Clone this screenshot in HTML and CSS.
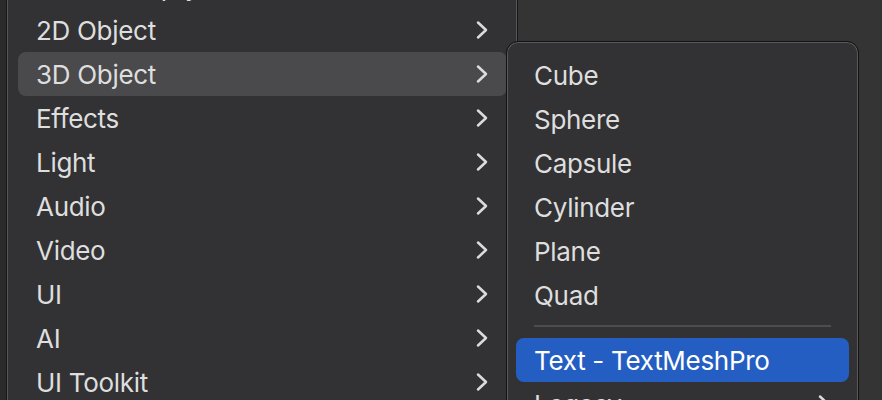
FILE: index.html
```html
<!DOCTYPE html>
<html lang="en">
<head>
<meta charset="utf-8">
<title>GameObject menu</title>
<link rel="stylesheet" href="styles.css">
</head>
<body>
<div class="screen">
  <div class="menu main-menu">
    <ul class="items">
      <li class="item"><span class="label">Create Empty Parent</span></li>
      <li class="item"><span class="label">2D Object</span><svg class="chev" viewBox="0 0 14 20"><path d="M3 2.5 L11 10 L3 17.5"/></svg></li>
      <li class="item active"><span class="label">3D Object</span><svg class="chev" viewBox="0 0 14 20"><path d="M3 2.5 L11 10 L3 17.5"/></svg></li>
      <li class="item"><span class="label">Effects</span><svg class="chev" viewBox="0 0 14 20"><path d="M3 2.5 L11 10 L3 17.5"/></svg></li>
      <li class="item"><span class="label">Light</span><svg class="chev" viewBox="0 0 14 20"><path d="M3 2.5 L11 10 L3 17.5"/></svg></li>
      <li class="item"><span class="label">Audio</span><svg class="chev" viewBox="0 0 14 20"><path d="M3 2.5 L11 10 L3 17.5"/></svg></li>
      <li class="item"><span class="label">Video</span><svg class="chev" viewBox="0 0 14 20"><path d="M3 2.5 L11 10 L3 17.5"/></svg></li>
      <li class="item"><span class="label">UI</span><svg class="chev" viewBox="0 0 14 20"><path d="M3 2.5 L11 10 L3 17.5"/></svg></li>
      <li class="item"><span class="label">AI</span><svg class="chev" viewBox="0 0 14 20"><path d="M3 2.5 L11 10 L3 17.5"/></svg></li>
      <li class="item"><span class="label">UI Toolkit</span><svg class="chev" viewBox="0 0 14 20"><path d="M3 2.5 L11 10 L3 17.5"/></svg></li>
    </ul>
  </div>
  <div class="backdrop"></div>
  <div class="menu submenu">
    <ul class="items">
      <li class="item"><span class="label">Cube</span></li>
      <li class="item"><span class="label">Sphere</span></li>
      <li class="item"><span class="label">Capsule</span></li>
      <li class="item"><span class="label">Cylinder</span></li>
      <li class="item"><span class="label">Plane</span></li>
      <li class="item"><span class="label">Quad</span></li>
      <li class="separator"></li>
      <li class="item selected"><span class="label">Text - TextMeshPro</span></li>
      <li class="item"><span class="label">Legacy</span><svg class="chev" viewBox="0 0 14 20"><path d="M3 2.5 L11 10 L3 17.5"/></svg></li>
    </ul>
  </div>
</div>
</body>
</html>
```

FILE: styles.css
```css
html, body {
  margin: 0;
  padding: 0;
  background: #2a2a2b;
  width: 882px;
  height: 400px;
  overflow: hidden;
}

.screen {
  position: relative;
  display: flex;
  width: 882px;
  height: 400px;
  overflow: hidden;
  font-family: "Inter", "Noto Sans", sans-serif;
  font-size: 26px;
  letter-spacing: -0.3px;
  color: #dedede;
}

.items {
  list-style: none;
  margin: 0;
  padding: 0;
  display: flex;
  flex-direction: column;
}

.item {
  height: 44px;
  display: flex;
  align-items: center;
  justify-content: space-between;
  padding: 0 19px 0 18px;
  border-radius: 8px;
  white-space: nowrap;
}

.label {
  display: block;
  line-height: 42px;
  padding-top: 2px;
}

.chev {
  width: 14px;
  height: 20px;
  flex: none;
  margin-right: -1px;
}

.chev path {
  fill: none;
  stroke: #dcdcdc;
  stroke-width: 2.5;
  stroke-linecap: round;
  stroke-linejoin: round;
}

.main-menu {
  margin-left: 7px;
  width: 508px;
  height: 420px;
  background: #323234;
  border-left: 1px solid #58585a;
  border-right: 1px solid #58585a;
  box-shadow: -1px 0 0 #161617, 1px 0 0 #161617;
  flex: none;
  z-index: 1;
}

.main-menu .items {
  margin-top: -36px;
  padding: 0 9px 0 10px;
}

.main-menu .item.active {
  background: #4a4a4c;
}

.backdrop {
  flex: 1;
  background: #343435;
  margin-left: 1px;
}

.submenu {
  position: absolute;
  left: 506px;
  top: 41px;
  width: 351px;
  height: 400px;
  background: #323234;
  border: 1px solid #121213;
  border-radius: 12px;
  box-shadow: inset 0 0 0 1px #5a5a5c;
  z-index: 2;
}

.submenu .items {
  padding: 11px 9px 0 9px;
}

.submenu .separator {
  height: 21px;
  margin: 0 18px;
  display: flex;
  align-items: flex-start;
}

.submenu .separator::before {
  content: "";
  display: block;
  width: 100%;
  height: 2px;
  margin-top: 8px;
  background: #4d4d4f;
}

.submenu .item.selected {
  background: #255ec2;
  color: #ffffff;
}
```
